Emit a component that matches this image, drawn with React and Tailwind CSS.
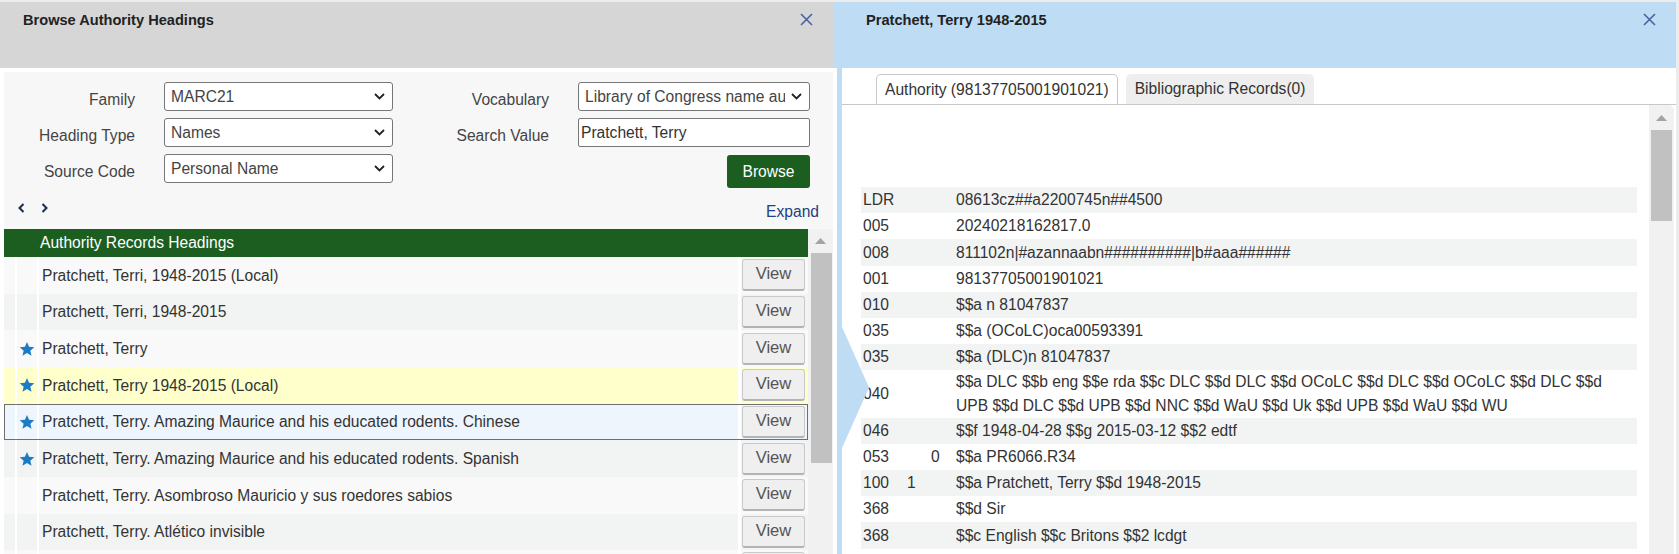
import React from 'react';

const headings = [
  { text: 'Pratchett, Terri, 1948-2015 (Local)', star: false, bg: 'bg-[#f9f9f9]' },
  { text: 'Pratchett, Terri, 1948-2015', star: false, bg: 'bg-[#f2f3f3]' },
  { text: 'Pratchett, Terry', star: true, bg: 'bg-[#f9f9f9]' },
  { text: 'Pratchett, Terry 1948-2015 (Local)', star: true, bg: 'bg-[#ffffcc]' },
  { text: 'Pratchett, Terry. Amazing Maurice and his educated rodents. Chinese', star: true, bg: 'bg-[#eef5fd]', selected: true },
  { text: 'Pratchett, Terry. Amazing Maurice and his educated rodents. Spanish', star: true, bg: 'bg-[#f2f3f3]' },
  { text: 'Pratchett, Terry. Asombroso Mauricio y sus roedores sabios', star: false, bg: 'bg-[#f9f9f9]' },
  { text: 'Pratchett, Terry. Atlético invisible', star: false, bg: 'bg-[#f2f3f3]' },
];

const fields = [
  { tag: 'LDR', i1: '', i2: '', value: '08613cz##a2200745n##4500' },
  { tag: '005', i1: '', i2: '', value: '20240218162817.0' },
  { tag: '008', i1: '', i2: '', value: '811102n|#azannaabn##########|b#aaa######' },
  { tag: '001', i1: '', i2: '', value: '98137705001901021' },
  { tag: '010', i1: '', i2: '', value: '$$a n 81047837' },
  { tag: '035', i1: '', i2: '', value: '$$a (OCoLC)oca00593391' },
  { tag: '035', i1: '', i2: '', value: '$$a (DLC)n 81047837' },
  { tag: '040', i1: '', i2: '', value: '$$a DLC $$b eng $$e rda $$c DLC $$d DLC $$d OCoLC $$d DLC $$d OCoLC $$d DLC $$d UPB $$d DLC $$d UPB $$d NNC $$d WaU $$d Uk $$d UPB $$d WaU $$d WU' },
  { tag: '046', i1: '', i2: '', value: '$$f 1948-04-28 $$g 2015-03-12 $$2 edtf' },
  { tag: '053', i1: '', i2: '0', value: '$$a PR6066.R34' },
  { tag: '100', i1: '1', i2: '', value: '$$a Pratchett, Terry $$d 1948-2015' },
  { tag: '368', i1: '', i2: '', value: '$$d Sir' },
  { tag: '368', i1: '', i2: '', value: '$$c English $$c Britons $$2 lcdgt' },
];

const CloseIcon = () => (
  <svg width="13" height="13" viewBox="0 0 13 13">
    <path d="M1 1L12 12M12 1L1 12" stroke="#4563a3" strokeWidth="1.6" fill="none" />
  </svg>
);

const Chevron = () => (
  <svg width="11" height="7" viewBox="0 0 11 7">
    <path d="M1 1l4.5 4.5L10 1" stroke="#222" strokeWidth="1.8" fill="none" />
  </svg>
);

const Star = () => (
  <svg width="16" height="16" viewBox="0 0 24 24">
    <path d="M12 1.5l3.1 7.2 7.8.7-5.9 5.1 1.8 7.7L12 18.1 5.2 22.2 7 14.5 1.1 9.4l7.8-.7z" fill="#1b7bc4" />
  </svg>
);

const ScrollUp = () => (
  <svg width="11" height="6" viewBox="0 0 11 6">
    <path d="M0 6L5.5 0 11 6z" fill="#a3a3a3" />
  </svg>
);

const Select = ({ value, width }) => (
  <div className={`flex h-[29px] items-center justify-between rounded-[3px] border border-[#767676] bg-white pl-[6px] pr-[7px] ${width}`}>
    <span className="mr-[6px] flex-1 overflow-hidden whitespace-nowrap">{value}</span>
    <Chevron />
  </div>
);

const LeftPane = () => (
  <div className="flex w-[833px] flex-col bg-white">
    <div className="flex h-[66px] shrink-0 items-start justify-between bg-[#d6d6d6] pl-[23px] pr-[20px] pt-[9px]">
      <h2 className="text-[14.6px] font-bold leading-[18px] text-[#222]">Browse Authority Headings</h2>
      <div className="pt-[2px]"><CloseIcon /></div>
    </div>
    <div className="flex flex-1 flex-col pl-[4px] pt-[4px]">
      <div className="flex flex-1 flex-col overflow-hidden bg-[#f7f7f7] text-[15.6px] text-[#444]">
        <div className="flex flex-col gap-[7px] pt-[10px]">
          <div className="flex h-[29px] items-start">
            <label className="w-[131px] pt-[3px] text-right leading-[29px]">Family</label>
            <div className="ml-[29px]"><Select value="MARC21" width="w-[229px]" /></div>
            <label className="w-[156px] pt-[3px] text-right leading-[29px]">Vocabulary</label>
            <div className="ml-[29px]"><Select value="Library of Congress name authority file" width="w-[232px]" /></div>
          </div>
          <div className="flex h-[29px] items-start">
            <label className="w-[131px] pt-[3px] text-right leading-[29px]">Heading Type</label>
            <div className="ml-[29px]"><Select value="Names" width="w-[229px]" /></div>
            <label className="w-[156px] pt-[3px] text-right leading-[29px]">Search Value</label>
            <input
              readOnly
              value="Pratchett, Terry"
              className="ml-[29px] h-[29px] w-[232px] rounded-[2px] border border-[#767676] bg-white pl-[2px] text-[15.6px] text-[#333] outline-none"
            />
          </div>
          <div className="flex h-[29px] items-start">
            <label className="w-[131px] pt-[3px] text-right leading-[29px]">Source Code</label>
            <div className="ml-[29px]"><Select value="Personal Name" width="w-[229px]" /></div>
            <button className="ml-[334px] mt-[1px] h-[33px] w-[83px] rounded-[3px] bg-[#1b5e20] text-[15.6px] text-white">Browse</button>
          </div>
        </div>
        <div className="flex h-[46px] shrink-0 items-start justify-between pl-[14px] pr-[14px] pt-[20px]">
          <div className="flex gap-[16px]">
            <svg width="7" height="10" viewBox="0 0 7 10"><path d="M5.5 1L1.5 5l4 4" stroke="#1b2b4b" strokeWidth="2" fill="none" /></svg>
            <svg width="7" height="10" viewBox="0 0 7 10"><path d="M1.5 1l4 4-4 4" stroke="#1b2b4b" strokeWidth="2" fill="none" /></svg>
          </div>
          <span className="leading-[18px] text-[#24407f]">Expand</span>
        </div>
        <div className="flex flex-1 overflow-hidden">
          <div className="flex w-[804px] flex-col">
            <div className="h-[28px] shrink-0 bg-[#1b5e20] pl-[36px] leading-[28px] text-white">Authority Records Headings</div>
            {headings.map((h, i) => (
              <div
                key={i}
                className={`flex h-[36.67px] shrink-0 text-[#333] ${h.bg} ${h.selected ? 'outline-1 -outline-offset-1 outline-[#6f6f6f]' : ''}`}
              >
                <div className="w-[11px]" />
                <div className="flex w-[22px] items-center justify-center border-l-2 border-white">
                  {h.star && <Star />}
                </div>
                <div className="flex flex-1 items-center overflow-hidden whitespace-nowrap border-l-2 border-white pl-[3px]">{h.text}</div>
                <div className="flex w-[70px] items-center border-l-[3px] border-white pl-[1px]">
                  <button className="h-[32px] w-[63px] rounded-[3px] border border-b-2 border-[#c9c9c9] border-b-[#b3b3b3] bg-[#efefef] text-[16.6px] text-[#555]">View</button>
                </div>
              </div>
            ))}
            <div className="flex h-[36.67px] shrink-0 bg-[#f9f9f9]">
              <div className="w-[11px]" />
              <div className="w-[22px] border-l-2 border-white" />
              <div className="flex-1 border-l-2 border-white" />
              <div className="w-[70px] border-l-[3px] border-white pl-[1px] pt-[2px]">
                <div className="h-[32px] w-[63px] rounded-[3px] border border-[#c9c9c9] bg-[#efefef]" />
              </div>
            </div>
          </div>
          <div className="flex w-[25px] flex-col bg-[#f1f1f1]">
            <div className="flex h-[24px] items-center justify-center"><ScrollUp /></div>
            <div className="ml-[3px] h-[210px] w-[21px] bg-[#c1c1c1]" />
          </div>
        </div>
      </div>
    </div>
  </div>
);

const RightPane = () => (
  <div className="flex w-[843px] flex-col bg-[#bedcf4]">
    <div className="flex h-[66px] shrink-0 items-start justify-between pl-[33px] pr-[20px] pt-[9px]">
      <h2 className="text-[14.6px] font-bold leading-[18px] text-[#222]">Pratchett, Terry 1948-2015</h2>
      <div className="pt-[2px]"><CloseIcon /></div>
    </div>
    <div className="relative flex flex-1 overflow-hidden">
      <div className="w-[4px] bg-white" />
      <div className="w-[5px]" />
      <div className="flex flex-1 flex-col bg-white text-[15.6px] text-[#333]">
        <div className="flex h-[37px] shrink-0 items-end gap-[8px] border-b border-[#c8c8c8] pl-[34px]">
          <div className="h-[30px] rounded-t-[5px] border border-b-0 border-[#c8c8c8] bg-white px-[8px] leading-[29px]">Authority (98137705001901021)</div>
          <div className="h-[30px] rounded-t-[5px] bg-[#eeeeee] px-[9px] leading-[30px]">Bibliographic Records(0)</div>
        </div>
        <div className="flex flex-1 overflow-hidden">
          <div className="flex-1 pl-[19px] pr-[12px] pt-[82px]">
            {fields.map((f, i) => (
              <div key={i} className={`flex min-h-[26.2px] items-center leading-[23.65px] ${i % 2 === 0 ? 'bg-[#f2f3f3]' : 'bg-white'}`}>
                <div className="w-[46px] shrink-0 pl-[2px]">{f.tag}</div>
                <div className="w-[24px] shrink-0">{f.i1}</div>
                <div className="w-[25px] shrink-0">{f.i2}</div>
                <div className="flex-1 pr-[4px]">{f.value}</div>
              </div>
            ))}
            <div className="h-[26px] bg-white" />
          </div>
          <div className="mr-[2px] flex w-[25px] flex-col rounded-tr-[6px] bg-[#f1f1f1]">
            <div className="flex h-[25px] items-center justify-center"><ScrollUp /></div>
            <div className="ml-[2px] h-[91px] w-[21px] bg-[#c1c1c1]" />
          </div>
        </div>
      </div>
      <svg className="absolute left-[9px] top-[259px]" width="27" height="121" viewBox="0 0 27 121">
        <path d="M0 0L27 60.5 0 121z" fill="#bedcf4" />
      </svg>
    </div>
  </div>
);

export default function App() {
  return (
    <div className="h-[554px] w-[1679px] overflow-hidden bg-[#ececec] pt-[2px] font-['Liberation_Sans',Arial,sans-serif]">
      <div className="flex h-[552px] w-[1676px]">
        <LeftPane />
        <RightPane />
      </div>
    </div>
  );
}
